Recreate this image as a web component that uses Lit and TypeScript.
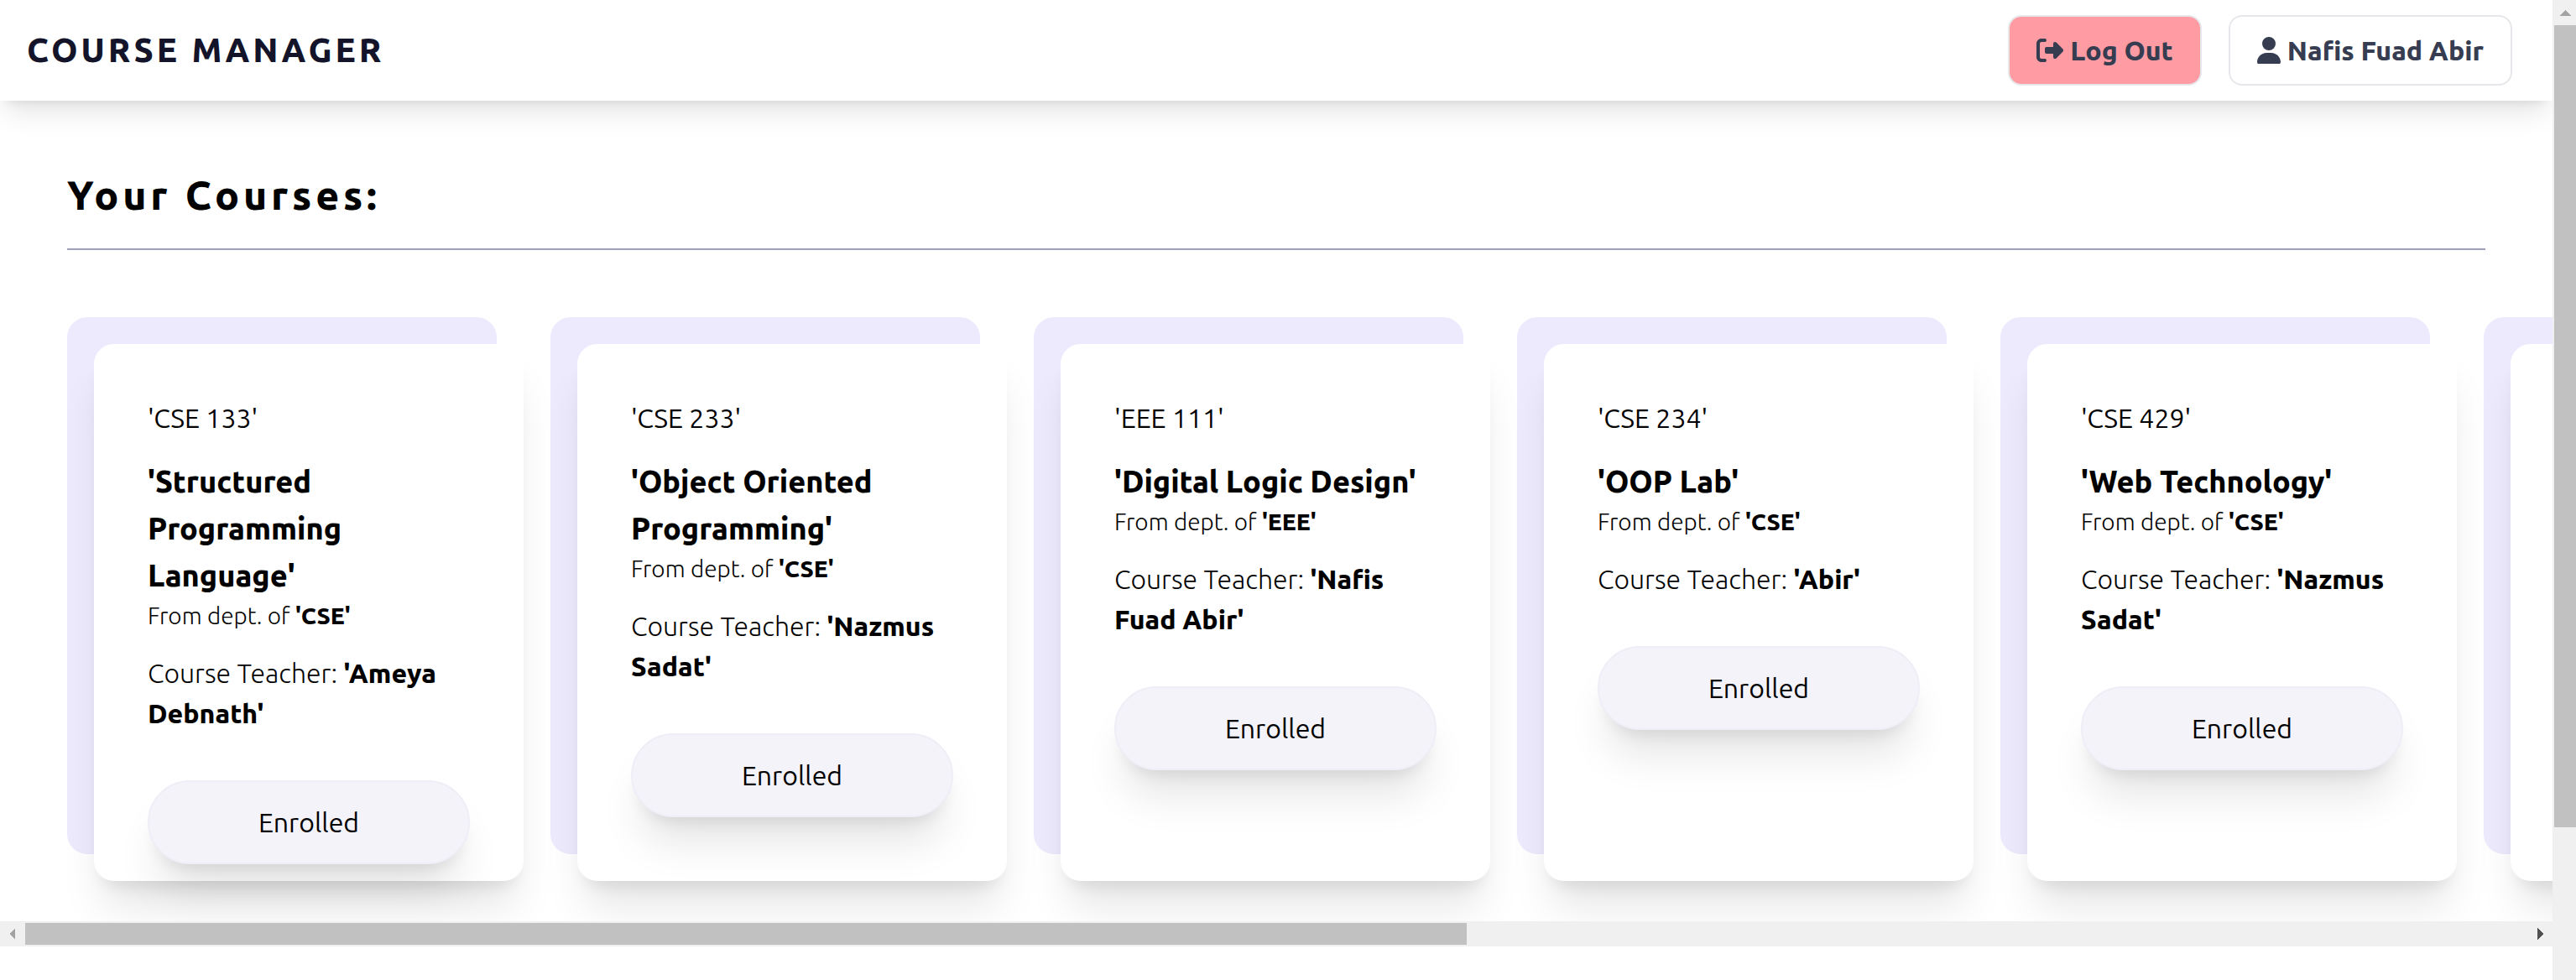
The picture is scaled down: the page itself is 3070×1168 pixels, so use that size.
import { LitElement, html, css, svg } from "lit";
import { customElement, property } from "lit/decorators.js";

interface Course {
  code: string;
  title: string;
  dept: string;
  teacher: string;
}

const courses: Course[] = [
  { code: "CSE 133", title: "Structured Programming Language", dept: "CSE", teacher: "Ameya Debnath" },
  { code: "CSE 233", title: "Object Oriented Programming", dept: "CSE", teacher: "Nazmus Sadat" },
  { code: "EEE 111", title: "Digital Logic Design", dept: "EEE", teacher: "Nafis Fuad Abir" },
  { code: "CSE 234", title: "OOP Lab", dept: "CSE", teacher: "Abir" },
  { code: "CSE 429", title: "Web Technology", dept: "CSE", teacher: "Nazmus Sadat" },
];

const quoted = (text: string) => `'${text}'`;

const logoutIcon = svg`<path d="M377.9 105.9L500.7 228.7c7.2 7.2 11.3 17.1 11.3 27.3s-4.1 20.1-11.3 27.3L377.9 406.1c-6.4 6.4-15 9.9-24 9.9c-18.7 0-33.9-15.2-33.9-33.9l0-62.1-128 0c-17.7 0-32-14.3-32-32l0-64c0-17.7 14.3-32 32-32l128 0 0-62.1c0-18.7 15.2-33.9 33.9-33.9c9 0 17.6 3.6 24 9.9zM160 96L96 96c-17.7 0-32 14.3-32 32l0 256c0 17.7 14.3 32 32 32l64 0c17.7 0 32 14.3 32 32s-14.3 32-32 32l-64 0c-53 0-96-43-96-96L0 128C0 75 43 32 96 32l64 0c17.7 0 32 14.3 32 32s-14.3 32-32 32z"/>`;
const userIcon = svg`<path d="M224 256A128 128 0 1 0 224 0a128 128 0 1 0 0 256zm-45.7 48C79.8 304 0 383.8 0 482.3C0 498.7 13.3 512 29.7 512l388.6 0c16.4 0 29.7-13.3 29.7-29.7C448 383.8 368.2 304 269.7 304l-91.4 0z"/>`;

@customElement("course-card")
class CourseCard extends LitElement {
  @property({ attribute: false }) course?: Course;

  static styles = css`
    :host {
      display: block;
      flex: none;
      width: 512px;
      height: 640px;
      border-radius: 24px;
      background: #eeeafe;
    }
    .card {
      position: relative;
      top: 32px;
      left: 32px;
      box-sizing: border-box;
      height: 100%;
      padding: 64px 64px 0;
      border-radius: 24px;
      background: #fff;
      box-shadow: 0 40px 50px -10px rgb(0 0 0 / 0.1), 0 16px 20px -12px rgb(0 0 0 / 0.1);
    }
    p,
    h2 {
      margin: 0;
    }
    .code {
      line-height: 48px;
      margin-bottom: 24px;
    }
    .title {
      font-size: 36px;
      line-height: 56px;
      font-weight: 800;
    }
    .dept {
      font-size: 28px;
      line-height: 40px;
      font-weight: 300;
      margin-bottom: 24px;
    }
    .teacher {
      line-height: 48px;
      font-weight: 300;
      margin-bottom: 56px;
    }
    b {
      font-weight: 800;
    }
    button {
      display: block;
      box-sizing: border-box;
      width: 100%;
      height: 100px;
      padding: 0;
      border: 2px solid #efedf5;
      border-radius: 50px;
      background: #f4f3fa;
      color: #000;
      font: inherit;
      box-shadow: 0 40px 50px -10px rgb(0 0 0 / 0.1), 0 16px 20px -12px rgb(0 0 0 / 0.1);
    }
  `;

  render() {
    const c = this.course;
    return html`<article class="card">
      ${c
        ? html`<p class="code">${quoted(c.code)}</p>
            <h2 class="title">${quoted(c.title)}</h2>
            <p class="dept">From dept. of <b>${quoted(c.dept)}</b></p>
            <p class="teacher">Course Teacher: <b>${quoted(c.teacher)}</b></p>
            <button type="button">Enrolled</button>`
        : null}
    </article>`;
  }
}

@customElement("app-root")
class AppRoot extends LitElement {
  static styles = css`
    :host {
      display: flex;
      min-height: 100vh;
      overflow: hidden;
      background: #fff;
      color: #000;
      font-family: Ubuntu, "Noto Sans", sans-serif;
      font-size: 32px;
      line-height: 48px;
    }
    .page {
      flex: 1;
      min-width: 0;
      overflow: hidden;
    }
    header {
      position: relative;
      display: flex;
      align-items: center;
      justify-content: space-between;
      box-sizing: border-box;
      padding: 18px 48px 18px 32px;
      background: #fff;
      box-shadow: 0 20px 30px -6px rgb(0 0 0 / 0.1), 0 8px 12px -8px rgb(0 0 0 / 0.1);
    }
    .brand {
      color: #131429;
      font-size: 40px;
      font-weight: 800;
      letter-spacing: 0.1em;
      text-decoration: none;
    }
    nav {
      display: flex;
      gap: 32px;
    }
    nav button {
      display: flex;
      align-items: center;
      gap: 8px;
      padding: 16px 32px;
      border: 2px solid #e5e7eb;
      border-radius: 16px;
      background: #fff;
      color: #373d51;
      font: inherit;
      font-weight: 800;
    }
    nav .logout {
      background: #ff9ca3;
    }
    nav svg {
      height: 32px;
      fill: currentColor;
    }
    .heading {
      margin: 0 80px 80px;
      padding: 80px 0 32px;
      border-bottom: 2px solid #9fa0b5;
      font-size: 48px;
      line-height: 64px;
      font-weight: 800;
      letter-spacing: 0.1em;
    }
    .courses {
      display: flex;
      gap: 64px;
      margin-top: -80px;
      padding: 80px;
      overflow: hidden;
    }
    .bar {
      display: flex;
      box-sizing: border-box;
      background: #f0f0f0;
      overflow: hidden;
    }
    .bar svg {
      flex: none;
      width: 30px;
      height: 30px;
      shape-rendering: crispEdges;
    }
    .rail {
      flex: 1;
      min-width: 0;
    }
    .thumb {
      background: #c1c1c1;
    }
    .horizontal {
      height: 30px;
    }
    .horizontal .thumb {
      height: 26px;
      margin-top: 2px;
    }
    .vertical {
      flex: none;
      flex-direction: column;
      width: 28px;
    }
    .vertical .rail {
      display: grid;
    }
    .vertical .thumb {
      margin-left: 2px;
    }
  `;

  private scrolled = { across: 57.6, down: 84 };

  render() {
    return html`
      <div class="page">
        <header>
          <a class="brand" href="#">COURSE MANAGER</a>
          <nav>
            <button class="logout" type="button">
              <svg viewBox="0 0 512 512" aria-hidden="true">${logoutIcon}</svg>
              <span>Log Out</span>
            </button>
            <button type="button">
              <svg viewBox="0 0 448 512" aria-hidden="true">${userIcon}</svg>
              <span>Nafis Fuad Abir</span>
            </button>
          </nav>
        </header>
        <main>
          <h1 class="heading">Your Courses:</h1>
          <section class="courses">
            ${courses.map((c) => html`<course-card .course=${c}></course-card>`)}
            <course-card></course-card>
          </section>
          <div class="bar horizontal" aria-hidden="true">
            <svg viewBox="0 0 30 30"><path fill="#a3a3a3" d="M18 8v14l-7-7z" /></svg>
            <div class="rail"><div class="thumb" style="width:${this.scrolled.across}%"></div></div>
            <svg viewBox="0 0 30 30"><path fill="#505050" d="M12 8v14l7-7z" /></svg>
          </div>
        </main>
      </div>
      <div class="bar vertical" aria-hidden="true">
        <svg viewBox="0 0 30 30"><path fill="#a3a3a3" d="M8 19h14l-7-7z" /></svg>
        <div class="rail" style="grid-template-rows:${this.scrolled.down}% 1fr"><div class="thumb"></div></div>
      </div>
    `;
  }
}
